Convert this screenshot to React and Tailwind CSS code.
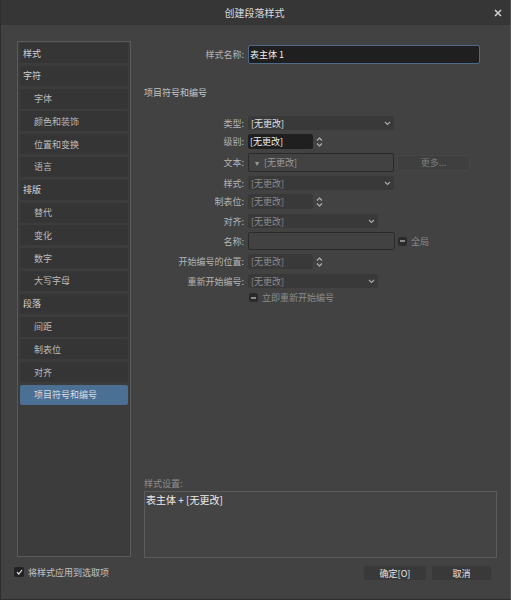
import React from "react";

const font = { fontFamily: '"Noto Sans CJK SC", "Noto Sans", sans-serif' };

const navItems = [
  { label: "样式", head: true },
  { label: "字符", head: true },
  { label: "字体" },
  { label: "颜色和装饰" },
  { label: "位置和变换" },
  { label: "语言" },
  { label: "排版", head: true },
  { label: "替代" },
  { label: "变化" },
  { label: "数字" },
  { label: "大写字母" },
  { label: "段落", head: true },
  { label: "间距" },
  { label: "制表位" },
  { label: "对齐" },
  { label: "项目符号和编号", active: true },
];

function Chevron() {
  return (
    <svg width="7" height="5" viewBox="0 0 7 5" className="shrink-0">
      <path d="M1 1 L3.5 3.5 L6 1" fill="none" stroke="#a8a8a8" strokeWidth="1.2" />
    </svg>
  );
}

function Spinner() {
  return (
    <svg width="7" height="12" viewBox="0 0 7 12" className="ml-[3px] shrink-0">
      <path d="M1 4.5 L3.5 2 L6 4.5" fill="none" stroke="#b0b0b0" strokeWidth="1.2" />
      <path d="M1 7.5 L3.5 10 L6 7.5" fill="none" stroke="#b0b0b0" strokeWidth="1.2" />
    </svg>
  );
}

function DashBox() {
  return (
    <span className="w-[9px] h-[9px] rounded-[2px] bg-[#2a2a2a] flex items-center justify-center shrink-0">
      <span className="w-[5px] h-[2px] bg-[#8a8a8a]" />
    </span>
  );
}

function Row({ label, h, mt, children }) {
  return (
    <div className="flex items-center" style={{ height: h, marginTop: mt }}>
      <div className="w-[101px] text-right text-[#b4b4b4] pr-[1px] shrink-0">{label}:</div>
      <div className="ml-[3px] flex items-center h-full">{children}</div>
    </div>
  );
}

function Select({ w, value, dim }) {
  return (
    <div
      className={`h-full rounded-[2px] bg-[#393939] flex items-center justify-between pl-[3px] pr-[3px] ${dim ? "text-[#8c8c8c]" : "text-[#e2e2e2]"}`}
      style={{ width: w }}
    >
      <span>{value}</span>
      <Chevron />
    </div>
  );
}

export default function App() {
  return (
    <div
      style={font}
      className="w-[511px] h-[600px] bg-[#424242] text-[9px] leading-none flex flex-col border-l border-[#2e2e2e] border-r border-r-[#555555] border-b border-b-[#2e2e2e] overflow-hidden"
    >
      {/* Title bar */}
      <div className="h-[25px] bg-[#363636] shrink-0 flex items-center">
        <div className="flex-1" />
        <div className="text-[10px] text-[#dcdcdc] pl-[6px]">创建段落样式</div>
        <div className="flex-1 flex justify-end pr-[8px]">
          <svg width="8" height="8" viewBox="0 0 8 8">
            <path d="M1 1 L7 7 M7 1 L1 7" stroke="#d0d0d0" strokeWidth="1.6" />
          </svg>
        </div>
      </div>

      {/* Main */}
      <div className="flex h-[533px] shrink-0">
        {/* Sidebar */}
        <div className="ml-[16px] mt-[16px] w-[114px] h-[516px] border border-[#5a5a5a] bg-[#3c3c3c] p-[1px] pt-[1px] flex flex-col gap-[2.8px]">
          {navItems.map((it) => (
            <div
              key={it.label}
              className={`h-[20px] mx-[1px] shrink-0 rounded-[2px] flex items-center ${
                it.active ? "bg-[#4c6f94] text-[#d8dde4]" : "bg-[#353535]"
              } ${it.head ? "pl-[3px] text-[#d2d2d2]" : "pl-[14px] text-[#bcbcbc]"}`}
            >
              {it.label}
            </div>
          ))}
        </div>

        {/* Right column */}
        <div className="ml-[13px] w-[353px] flex flex-col pt-[20px]">
          <Row label="样式名称" h={19} mt={0}>
            <div className="h-full w-[232px] bg-[#1f1f1f] border border-[#4e6a88] rounded-[2px] flex items-center pl-[1px] text-[#f0f0f0]">
              表主体 1
            </div>
          </Row>

          <div className="mt-[24px] text-[#c4c4c4]">项目符号和编号</div>

          <Row label="类型" h={14} mt={19}>
            <Select w={146} value="[无更改]" />
          </Row>
          <Row label="级别" h={15} mt={4}>
            <div className="h-full w-[65px] bg-[#1f1f1f] rounded-[2px] flex items-center pl-[2px] text-[#eeeeee]">[无更改]</div>
            <Spinner />
          </Row>
          <Row label="文本" h={19} mt={4}>
            <div className="h-full w-[146px] border border-[#2a2a2a] rounded-[2px] flex items-center pl-[6px] text-[#9c9c9c]">
              <span className="text-[8px] mr-[5px]">▾</span>[无更改]
            </div>
            <div className="ml-[3px] h-[16px] w-[73px] bg-[#3f3f3f] border border-[#474747] rounded-[2px] flex items-center justify-center text-[#7c7c7c]">
              更多...
            </div>
          </Row>
          <Row label="样式" h={14} mt={4}>
            <Select w={146} value="[无更改]" dim />
          </Row>
          <Row label="制表位" h={15} mt={4}>
            <div className="h-full w-[65px] bg-[#393939] rounded-[2px] flex items-center pl-[3px] text-[#8c8c8c]">[无更改]</div>
            <Spinner />
          </Row>
          <Row label="对齐" h={14} mt={5}>
            <Select w={130} value="[无更改]" dim />
          </Row>
          <Row label="名称" h={18} mt={4}>
            <div className="h-full w-[147px] border border-[#2a2a2a] rounded-[2px]" />
            <span className="ml-[3px]"><DashBox /></span>
            <span className="ml-[4px] text-[#8c8c8c]">全局</span>
          </Row>
          <Row label="开始编号的位置" h={15} mt={4}>
            <div className="h-full w-[65px] bg-[#393939] rounded-[2px] flex items-center pl-[3px] text-[#8c8c8c]">[无更改]</div>
            <Spinner />
          </Row>
          <Row label="重新开始编号" h={14} mt={5}>
            <Select w={130} value="[无更改]" dim />
          </Row>
          <div className="flex items-center mt-[5px] ml-[105px] h-[9px]">
            <DashBox />
            <span className="ml-[4px] text-[#8c8c8c]">立即重新开始编号</span>
          </div>

          <div className="flex-1" />

          <div className="text-[#8e8e8e] mb-[3px]">样式设置:</div>
          <div className="h-[67px] w-[353px] border border-[#5c5c5c] bg-[#444444] pt-[3px] pl-[1px] text-[#ececec] text-[10px]">
            表主体 + [无更改]
          </div>
        </div>
      </div>

      {/* Bottom bar */}
      <div className="flex items-start pt-[8px]">
        <div className="ml-[13px] mt-[1px] flex items-center">
          <span className="w-[10px] h-[10px] rounded-[2px] bg-[#222222] flex items-center justify-center">
            <svg width="7" height="6" viewBox="0 0 7 6">
              <path d="M1 3.2 L2.8 5 L6 1" fill="none" stroke="#e6e6e6" strokeWidth="1.2" />
            </svg>
          </span>
          <span className="ml-[4px] text-[#c2c2c2]">将样式应用到选取项</span>
        </div>
        <div className="flex-1" />
        <div className="flex gap-[6px] mr-[19px]">
          <div className="w-[62px] h-[14px] bg-[#393939] rounded-[2px] flex items-center justify-center text-[#e4e4e4]">确定[O]</div>
          <div className="w-[59px] h-[14px] bg-[#393939] rounded-[2px] flex items-center justify-center text-[#e4e4e4]">取消</div>
        </div>
      </div>
    </div>
  );
}
